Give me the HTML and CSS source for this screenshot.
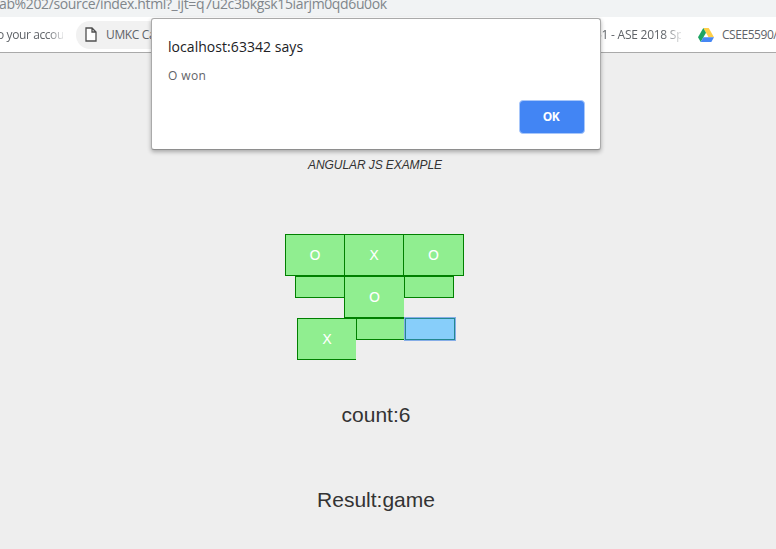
FILE: index.html
```html
<!DOCTYPE html>
<html lang="en">
<head>
<meta charset="utf-8">
<title>Angular JS Example</title>
<link rel="stylesheet" href="styles.css">
</head>
<body>
<header class="browser">
  <div class="address"><span class="url">ab%202/source/index.html?_ijt=q7u2c3bkgsk15iarjm0qd6u0ok</span></div>
  <nav class="bookmarks">
    <span class="bookmark account">o your accou</span>
    <span class="bookmark active">
      <svg class="page-icon" width="12" height="15" viewBox="0 0 12 15"><path d="M1 1h6l4 4v9H1zM7 1v4h4" fill="#fff" stroke="#505050" stroke-width="1.3"/></svg>
      <span class="umkc">UMKC Ca</span>
    </span>
    <span class="bookmark ase">51 - ASE 2018 Sp</span>
    <span class="bookmark drive">
      <svg width="16" height="14" viewBox="0 0 16 14"><path d="M5.3 0h5.4L16 9.2h-5.4z" fill="#ffcf48"/><path d="M5.3 0 0 9.3 2.7 14 8 4.7z" fill="#1da462"/><path d="M5.4 9.2H16L13.3 14H2.7z" fill="#4687f4"/></svg>
      <span class="csee">CSEE5590/</span>
    </span>
  </nav>
</header>
<main class="page">
  <p class="heading">ANGULAR JS EXAMPLE</p>
  <section class="board">
    <div class="row first">
      <div class="cell full">O</div><div class="cell full">X</div><div class="cell full end">O</div>
    </div>
    <div class="row second">
      <div class="cell small"></div><div class="cell full wide">O</div><div class="cell small end"></div>
    </div>
    <div class="row third">
      <div class="cell full">X</div><div class="cell small"></div><div class="cell small end focused"></div>
    </div>
  </section>
  <p class="status count">count:6</p>
  <p class="status result">Result:game</p>
</main>
<div class="dialog" role="alertdialog">
  <div class="title"><span>localhost:63342 says</span></div>
  <div class="message"><span>O won</span></div>
  <button class="ok">OK</button>
</div>
</body>
</html>
```
FILE: styles.css
```css
* { box-sizing: border-box; }
body {
  margin: 0;
  width: 776px;
  height: 549px;
  overflow: hidden;
  background: #eee;
  font-family: "Liberation Sans", sans-serif;
}
p { margin: 0; }
.browser {
  height: 53px;
  background: #fff;
  border-bottom: 1px solid #a9a9a9;
  font-family: "Open Sans", sans-serif;
  white-space: nowrap;
  overflow: hidden;
}
.address { height: 17px; background: #f1f3f4; }
.url {
  display: block;
  position: relative;
  top: -6px;
  left: -1px;
  font-size: 14px;
  line-height: 20px;
  letter-spacing: -0.37px;
  color: #80868b;
}
.bookmarks { display: flex; align-items: center; height: 35px; font-size: 12px; color: #5f6368; }
.bookmark { display: flex; align-items: center; height: 28px; flex: none; }
.account {
  width: 66px;
  margin-left: -3px;
  letter-spacing: -0.4px;
  -webkit-mask-image: linear-gradient(to right, #000 50px, transparent 70px);
}
.active { width: 110px; margin-left: 13px; padding-left: 9px; border-radius: 14px; background: #f1f1f1; }
.umkc { margin-left: 9px; letter-spacing: -0.35px; }
.page-icon { flex: none; }
.ase {
  width: 86px;
  margin-left: 409px;
  letter-spacing: -0.25px;
  -webkit-mask-image: linear-gradient(to right, #000 68px, transparent 90px);
}
.drive { margin-left: 17px; }
.drive svg { flex: none; }
.csee { margin-left: 8px; letter-spacing: -0.45px; }
.page { padding-top: 103px; }
.heading {
  width: 750px;
  text-align: center;
  font-size: 12px;
  line-height: 18px;
  letter-spacing: -0.08px;
  font-style: italic;
  color: #333;
}
.board {
  margin: 60px 0 0 285px;
  font-family: "DejaVu Sans", sans-serif;
  font-size: 14px;
  color: #fff;
}
.row { display: flex; align-items: flex-start; height: 42px; }
.second { margin-left: 10px; }
.third { margin-left: 12px; }
.cell { background: #90ee90; border: 1px solid #008000; border-right: 0; }
.full { width: 59px; height: 42px; line-height: 40px; text-align: center; }
.wide { width: 60px; }
.small { width: 49px; height: 22px; }
.end { border-right: 1px solid #008000; width: 50px; }
.full.end { width: 61px; }
.focused { background: #87cefa; border-color: #238890; box-shadow: 0 0 0 1px #85ade7; }
.status { width: 752px; text-align: center; font-size: 21px; line-height: 30px; color: #333; }
.count { margin-top: 40px; }
.result { margin-top: 55px; }
.dialog {
  position: absolute;
  top: 18px;
  left: 151px;
  width: 450px;
  height: 132px;
  padding: 18px 16px 16px;
  display: flex;
  flex-direction: column;
  border: 1px solid #aaa;
  border-bottom-color: #8e8e8e;
  border-radius: 3px;
  background: #fff;
  box-shadow: 0 2px 4px rgba(0, 0, 0, .3);
  font-family: "Open Sans", sans-serif;
}
.title { font-size: 14px; line-height: 20px; letter-spacing: 0.05px; color: #202124; }
.message { margin-top: 9px; font-size: 12px; line-height: 20px; letter-spacing: 0.4px; color: #5f6368; }
.ok {
  align-self: flex-end;
  width: 66px;
  height: 34px;
  margin: auto -1px -1px 0;
  padding: 0 2px 0 0;
  border: 1px solid #a8c7fa;
  border-radius: 4px;
  background: #4285f4;
  color: #fff;
  font: bold 12px/30px "Open Sans", sans-serif;
  letter-spacing: -0.4px;
}
```
